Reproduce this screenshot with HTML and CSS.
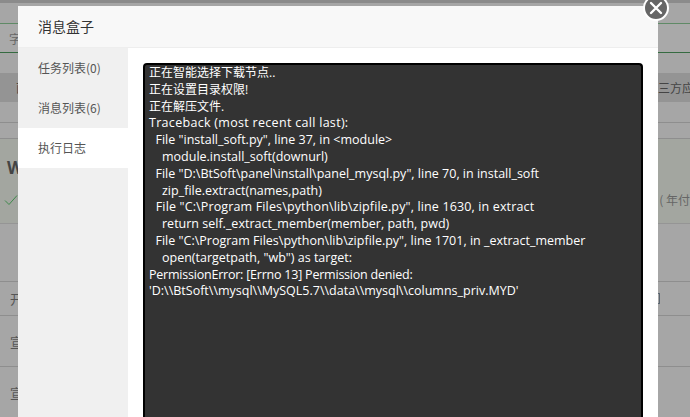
FILE: index.html
```html
<!DOCTYPE html>
<html lang="zh-CN">
<head>
<meta charset="utf-8">
<title>消息盒子</title>
<link rel="stylesheet" href="styles.css">
</head>
<body>
<div class="page">
  <div class="strip-top"></div>
  <div class="row-plain r20"></div>
  <div class="tab-row"><span>字</span></div>
  <div class="row-plain r20"></div>
  <div class="head-row"><span>面</span><span class="head-right">三方应</span></div>
  <div class="row-plain r21 line"></div>
  <div class="row-plain r15 line"></div>
  <div class="soft-row">
    <div class="soft-title">W</div>
    <div class="soft-meta">
      <svg class="check" width="14" height="12" viewBox="0 0 14 12"><path d="M1 6.5 L5 10.5 L13 1.5" fill="none" stroke="#3f8a4c" stroke-width="1"/></svg>
      <span>( 年付</span>
    </div>
  </div>
  <div class="row-plain r58 line"></div>
  <div class="list-row h34 line"><span>开</span><span class="bracket"></span></div>
  <div class="list-row h51 line"><span>宣</span></div>
  <div class="list-row h50"><span>宣</span></div>
</div>

<div class="modal">
  <header class="modal-head">消息盒子</header>
  <div class="modal-body">
    <nav class="side">
      <div class="side-item">任务列表(0)</div>
      <div class="side-item">消息列表(6)</div>
      <div class="side-item active">执行日志</div>
    </nav>
    <main class="content">
      <pre class="log"><span class="zh">正在智能选择下载节点..
正在设置目录权限!
正在解压文件.</span>
<span class="wide">Traceback (most recent call last):</span>
  File "install_soft.py", line 37, in &lt;module&gt;
    module.install_soft(downurl)
  File "D:\BtSoft\panel\install\panel_mysql.py", line 70, in install_soft
    zip_file.extract(names,path)
<span class="roomy">  File "C:\Program Files\python\lib\zipfile.py", line 1630, in extract</span>
    return self._extract_member(member, path, pwd)
  File "C:\Program Files\python\lib\zipfile.py", line 1701, in _extract_member
    open(targetpath, "wb") as target:
<span class="tight">PermissionError: [Errno 13] Permission denied:</span>
'D:\\BtSoft\\mysql\\MySQL5.7\\data\\mysql\\columns_priv.MYD'</pre>
    </main>
  </div>
  <button class="close" aria-label="关闭">
    <svg width="14" height="14" viewBox="0 0 14 14"><path d="M2 2 L12 12 M12 2 L2 12" stroke="#fff" stroke-width="2.4" stroke-linecap="round"/></svg>
  </button>
</div>
</body>
</html>
```
FILE: styles.css
```css
* { box-sizing: border-box; }
html, body { margin: 0; height: 100%; overflow: hidden; }
body {
  width: 690px;
  height: 417px;
  position: relative;
  background: #a6a6a6;
  font-family: "Noto Sans CJK SC", "Open Sans", sans-serif;
  font-size: 12px;
  color: #555;
}
.page { display: flex; flex-direction: column; width: 690px; height: 417px; overflow: hidden; }
.strip-top { height: 3px; background: #8b8b8b; flex: none; }
.row-plain { flex: none; }
.r20 { height: 20px; }
.r21 { height: 21px; }
.r15 { height: 16px; }
.r58 { height: 58px; }
.line { border-bottom: 1px solid #8e8e8e; }
.tab-row {
  height: 30px;
  flex: none;
  border-top: 1px solid #5f8a66;
  border-bottom: 1px solid #356b41;
  padding-left: 9px;
  display: flex;
  align-items: center;
  font-size: 12px;
  color: #666;
  background: #a9a9a9;
}
.head-row {
  height: 29px;
  flex: none;
  background: #949494;
  display: flex;
  justify-content: space-between;
  align-items: center;
  padding-left: 16px;
  color: #444;
  font-size: 12px;
  white-space: nowrap;
  width: 690px;
}
.head-right { margin-right: -4px; }
.soft-row {
  height: 85px;
  flex: none;
  background: #a3a6a0;
  border-bottom: 1px solid #959595;
  padding: 19px 0 0 7px;
}
.soft-title { font: bold 17px/20px "Open Sans", sans-serif; color: #444; }
.soft-meta {
  margin-top: 13px;
  display: flex;
  justify-content: space-between;
  align-items: center;
  color: #666;
  font-size: 12px;
  white-space: nowrap;
}
.check { margin-left: -3px; }
.list-row {
  flex: none;
  display: flex;
  justify-content: space-between;
  align-items: center;
  padding: 0 30px 0 10px;
  color: #555;
  font-size: 13px;
}
.h34 { height: 34px; }
.h51 { height: 51px; }
.h50 { height: 50px; }
.bracket {
  width: 5px;
  height: 11px;
  border: 1px solid #5a6570;
  border-left: none;
}

.modal {
  position: absolute;
  left: 18px;
  top: 6px;
  width: 640px;
  height: 430px;
  background: #fff;
  color: #555;
}
.modal-head {
  height: 42px;
  background: #f8f8f8;
  border-bottom: 1px solid #eee;
  padding-left: 20px;
  font-size: 14px;
  line-height: 41px;
  color: #333;
}
.modal-body { display: flex; height: 388px; }
.side { width: 110px; flex: none; background: #f0f0f0; }
.side-item { height: 40px; line-height: 40px; padding-left: 20px; font-size: 12px; color: #555; }
.side-item.active { background: #fff; }
.content { flex: 1; padding: 15px; min-width: 0; }
.log {
  margin: 0;
  height: 373px;
  background: #333;
  border: 2px solid #000;
  border-bottom: none;
  border-radius: 4px 4px 0 0;
  padding: 0 4px;
  color: #fff;
  font-family: "Open Sans", "Noto Sans CJK SC", sans-serif;
  font-size: 12.5px;
  line-height: 16.8px;
  white-space: pre-wrap;
}
.zh { font-size: 12px; }
.wide { letter-spacing: 0.3px; }
.roomy { letter-spacing: 0.14px; }
.tight { letter-spacing: -0.22px; }
.close {
  position: absolute;
  right: -11px;
  top: -11px;
  width: 26px;
  height: 26px;
  padding: 0;
  border: 2px solid #fff;
  border-radius: 50%;
  background: #666;
  display: flex;
  align-items: center;
  justify-content: center;
}
```
